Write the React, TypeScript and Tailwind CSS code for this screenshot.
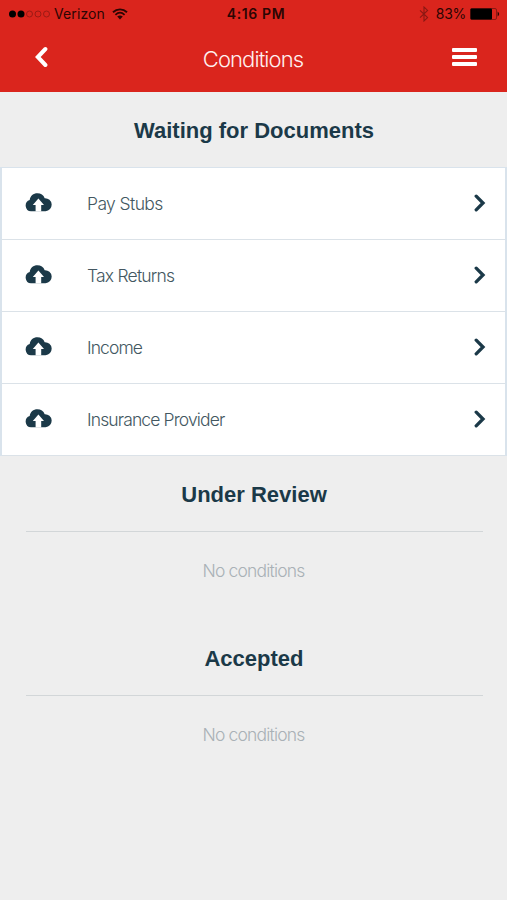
const pending = [
  { label: "Pay Stubs", spacing: "tracking-[-0.6px]" },
  { label: "Tax Returns", spacing: "tracking-[-0.8px]" },
  { label: "Income", spacing: "tracking-[-0.9px]" },
  { label: "Insurance Provider", spacing: "tracking-[-0.87px]" },
];

function WifiIcon() {
  return (
    <svg width="16" height="12" viewBox="0 0 16 12" fill="none" stroke="#2b0503">
      <path d="M1 4.2C5 .4 11 .4 15 4.2" strokeWidth="1.9" />
      <path d="M3.4 6.8C6.2 4.2 9.8 4.2 12.6 6.8" strokeWidth="1.8" />
      <path d="M5.2 8.6Q8 6.4 10.8 8.6L8 11.6Z" fill="#2b0503" stroke="none" />
    </svg>
  );
}

function BluetoothIcon() {
  return (
    <svg width="10" height="16" viewBox="0 0 10 16" fill="none" stroke="#8b1813" strokeWidth="1.1">
      <path d="M1 4.3 8.6 11.6 5 15V1L8.6 4.4 1 11.7" />
    </svg>
  );
}

function BatteryIcon() {
  return (
    <svg width="30" height="12" viewBox="0 0 30 12">
      <rect x=".5" y=".5" width="26" height="11" rx="1.5" fill="none" stroke="#8b1813" strokeWidth="1" />
      <rect x=".5" y=".5" width="21.5" height="11" rx="1" fill="#000" />
      <path d="M27.6 3.6q3.2 2.4 0 4.8z" fill="#2b0503" />
    </svg>
  );
}

function BackIcon() {
  return (
    <svg width="14" height="22" viewBox="0 0 14 22" fill="none">
      <path d="M11.4 3 3.8 11 11.4 19" stroke="#fff" strokeWidth="4" strokeLinecap="round" />
    </svg>
  );
}

function CloudUploadIcon() {
  return (
    <svg width="27" height="19" viewBox="0 0 27 19">
      <path
        d="M6 18.3A5.8 5.8 0 0 1 4.7 7C5.2 3 8.4.3 12.4.3c3.4 0 6.2 1.8 7.3 4.9A6.5 6.5 0 0 1 20.5 18.3Z"
        fill="#1b3948"
      />
      <path d="M13.4 5.6 19 12H16.2V18.6H10.6V12H7.8Z" fill="#fff" />
    </svg>
  );
}

function ChevronIcon() {
  return (
    <svg width="12" height="18" viewBox="0 0 12 18" fill="none">
      <path d="M2.2 2.2 9 9 2.2 15.8" stroke="#1b3948" strokeWidth="3.3" strokeLinecap="round" />
    </svg>
  );
}

function StatusBar() {
  return (
    <div className="flex h-[27px] items-center justify-between pl-[9px] pr-[7px] font-['Inter',sans-serif] text-[14px] text-[#2b0503]">
      <div className="flex w-[160px] items-center">
        <svg width="42" height="8" viewBox="0 0 42 8" fill="none" stroke="#8b1813" strokeWidth=".8">
          <circle cx="3.5" cy="4" r="3.5" fill="#000" stroke="none" />
          <circle cx="12" cy="4" r="3.5" fill="#000" stroke="none" />
          <circle cx="20.5" cy="4" r="3" />
          <circle cx="29" cy="4" r="3" />
          <circle cx="37.5" cy="4" r="3" />
        </svg>
        <span className="ml-[3px] mr-[7px] tracking-[0.1px]">Verizon</span>
        <WifiIcon />
      </div>
      <span className="pl-[3px] text-[14px] font-semibold tracking-[0.6px]">4:16 PM</span>
      <div className="flex w-[160px] items-center justify-end">
        <BluetoothIcon />
        <span className="ml-[7px] mr-1 tracking-[-0.3px]">83%</span>
        <BatteryIcon />
      </div>
    </div>
  );
}

function Header() {
  return (
    <header className="h-[92px] bg-[#da251d]">
      <StatusBar />
      <div className="flex h-[60px] items-center justify-between pl-[34px] pr-[30px]">
        <button type="button" aria-label="Back" className="w-[25px]">
          <BackIcon />
        </button>
        <h1 className="pt-[5px] pr-[5px] font-['Inter',sans-serif] text-[22px] font-light tracking-[-0.9px] text-[#fff0ef]">
          Conditions
        </h1>
        <button type="button" aria-label="Menu" className="flex w-[25px] flex-col gap-[3px]">
          <span className="h-1 rounded-[1px] bg-white" />
          <span className="h-1 rounded-[1px] bg-white" />
          <span className="h-1 rounded-[1px] bg-white" />
        </button>
      </div>
    </header>
  );
}

function SectionTitle({ children }: { children: string }) {
  return (
    <h2 className="flex h-[75px] items-center justify-center pt-[2px] pl-[1px] font-['Liberation_Sans',sans-serif] text-[22px] font-bold text-[#1b3948]">
      {children}
    </h2>
  );
}

function EmptySection({ title }: { title: string }) {
  return (
    <section className="h-[164px]">
      <SectionTitle>{title}</SectionTitle>
      <div className="mr-[24px] ml-[26px] border-t border-[#d2d6d8]" />
      <p className="pt-[25px] text-center font-['Inter',sans-serif] text-[17.5px] leading-7 font-light tracking-[-0.82px] text-[#a9b1b6]">
        No conditions
      </p>
    </section>
  );
}

export default function App() {
  return (
    <div className="h-[900px] w-[507px] overflow-hidden bg-[#eeeeee]">
      <Header />
      <SectionTitle>Waiting for Documents</SectionTitle>
      <ul className="border-x-2 border-t border-[#d9e3ec] bg-white">
        {pending.map((item) => (
          <li
            key={item.label}
            className="flex h-[72px] items-center border-b border-[#dbe2e8] pr-[19px] pb-[2px] pl-[23px]"
          >
            <CloudUploadIcon />
            <span
              className={`ml-[35px] flex-1 pt-[4px] font-['Inter',sans-serif] text-[17.5px] font-light text-[#435761] ${item.spacing}`}
            >
              {item.label}
            </span>
            <ChevronIcon />
          </li>
        ))}
      </ul>
      <EmptySection title="Under Review" />
      <EmptySection title="Accepted" />
    </div>
  );
}
